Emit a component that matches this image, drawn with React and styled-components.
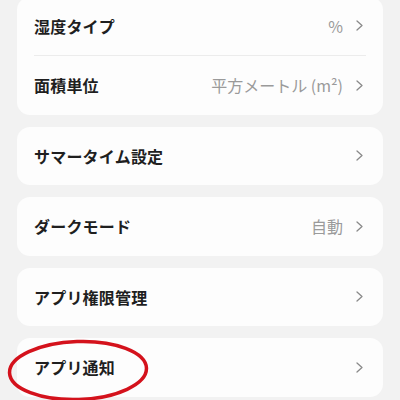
import React from "react";
import styled, { createGlobalStyle } from "styled-components";

const Global = createGlobalStyle`
  html, body { margin: 0; padding: 0; background: #f2f2f2; }
  body { font-family: "Noto Sans CJK JP", "Noto Sans", sans-serif; overflow: hidden; }
`;

const Page = styled.div`
  width: 400px;
  height: 400px;
  box-sizing: border-box;
  padding: 0 17px;
  background: #f2f2f2;
  display: flex;
  flex-direction: column;
  gap: 12px;
  overflow: hidden;
`;

const Card = styled.div`
  position: relative;
  flex: none;
  background: #fdfdfd;
  border-radius: 13px;
  display: flex;
  flex-direction: column;
  margin-top: ${(p) => (p.$first ? "-3.5px" : "0")};
`;

const Row = styled.div`
  height: 58.5px;
  box-sizing: border-box;
  padding: 0 20px 0 17px;
  display: flex;
  align-items: center;
  justify-content: space-between;
`;

const Label = styled.span`
  font-size: 16px;
  font-weight: 700;
  color: #1f1f1f;
  letter-spacing: 0.2px;
`;

const Right = styled.span`
  display: flex;
  align-items: center;
  gap: 13px;
`;

const Value = styled.span`
  font-size: 16px;
  font-weight: 400;
  color: #9a9a9a;
`;

const Divider = styled.div`
  height: 1px;
  margin: 0 17px;
  background: #ececec;
`;

const Ellipse = styled.svg`
  position: absolute;
  left: -16px;
  top: 0px;
  overflow: visible;
  pointer-events: none;
`;

const Chevron = () => (
  <svg width="7" height="11" viewBox="0 0 7 11">
    <polyline points="1,1 6,5.5 1,10" fill="none" stroke="#8a8a8a" strokeWidth="1.3" strokeLinecap="round" strokeLinejoin="round" />
  </svg>
);

const Item = ({ label, value }) => (
  <Row>
    <Label>{label}</Label>
    <Right>
      {value && <Value>{value}</Value>}
      <Chevron />
    </Right>
  </Row>
);

export default function App() {
  return (
    <>
      <Global />
      <Page>
        <Card $first>
          <Item label="湿度タイプ" value="%" />
          <Divider />
          <Item label="面積単位" value="平方メートル (m²)" />
        </Card>
        <Card>
          <Item label="サマータイム設定" />
        </Card>
        <Card>
          <Item label="ダークモード" value="自動" />
        </Card>
        <Card>
          <Item label="アプリ権限管理" />
        </Card>
        <Card>
          <Item label="アプリ通知" />
          <Ellipse width="150" height="70">
            <ellipse cx="77" cy="32.5" rx="68.5" ry="29" fill="none" stroke="#d4121c" strokeWidth="3.5" transform="rotate(-2 77 32.5)" />
          </Ellipse>
        </Card>
      </Page>
    </>
  );
}
